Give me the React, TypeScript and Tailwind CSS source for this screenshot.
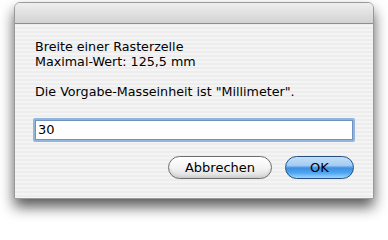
export default function App() {
  return (
    <div className="w-[388px] h-[222px] bg-white pl-[14px] pt-[2px] font-['DejaVu_Sans',sans-serif] text-[12.7px] text-black">
      <div className="w-[360px] h-[197px] flex flex-col rounded-t-[6px] border border-[#9a9a9a] bg-[repeating-linear-gradient(180deg,#ededed_0px,#ededed_2px,#f4f4f4_2px,#f4f4f4_4px)] shadow-[0_8px_14px_rgba(0,0,0,0.65)] overflow-hidden">
        <div className="h-[21px] shrink-0 border-b border-[#8e8e8e] bg-gradient-to-b from-[#efefef] to-[#d2d2d2]" />

        <div className="flex flex-col px-[18px] pt-[15px]">
          <div className="pl-[2px] leading-[15px]">
            <p>Breite einer Rasterzelle</p>
            <p>Maximal-Wert: 125,5 mm</p>
            <p className="mt-[15px]">Die Vorgabe-Masseinheit ist "Millimeter".</p>
          </div>

          <div className="mt-[19px] h-[24px] rounded-[2px] p-[2px] bg-[#93b5db]">
            <div className="h-full bg-white border border-[#6f93c0] flex items-center pl-[2px] text-[13px]">
              30
            </div>
          </div>

          <div className="mt-[14px] flex justify-end gap-[13px] pr-[1px]">
            <button className="w-[104px] h-[23px] rounded-full border border-[#6d6d6d] bg-gradient-to-b from-[#ffffff] via-[#f4f4f4] to-[#dcdcdc] shadow-[inset_0_-2px_3px_rgba(0,0,0,0.08)] text-[13px]">
              Abbrechen
            </button>
            <button className="w-[69px] h-[23px] rounded-full border border-[#274f86] bg-[linear-gradient(180deg,#c4def6_0%,#a3cdf3_40%,#3f8fe0_52%,#4ea5f0_75%,#9bd6ff_100%)] text-[13px]">
              OK
            </button>
          </div>
        </div>
      </div>
    </div>
  );
}
